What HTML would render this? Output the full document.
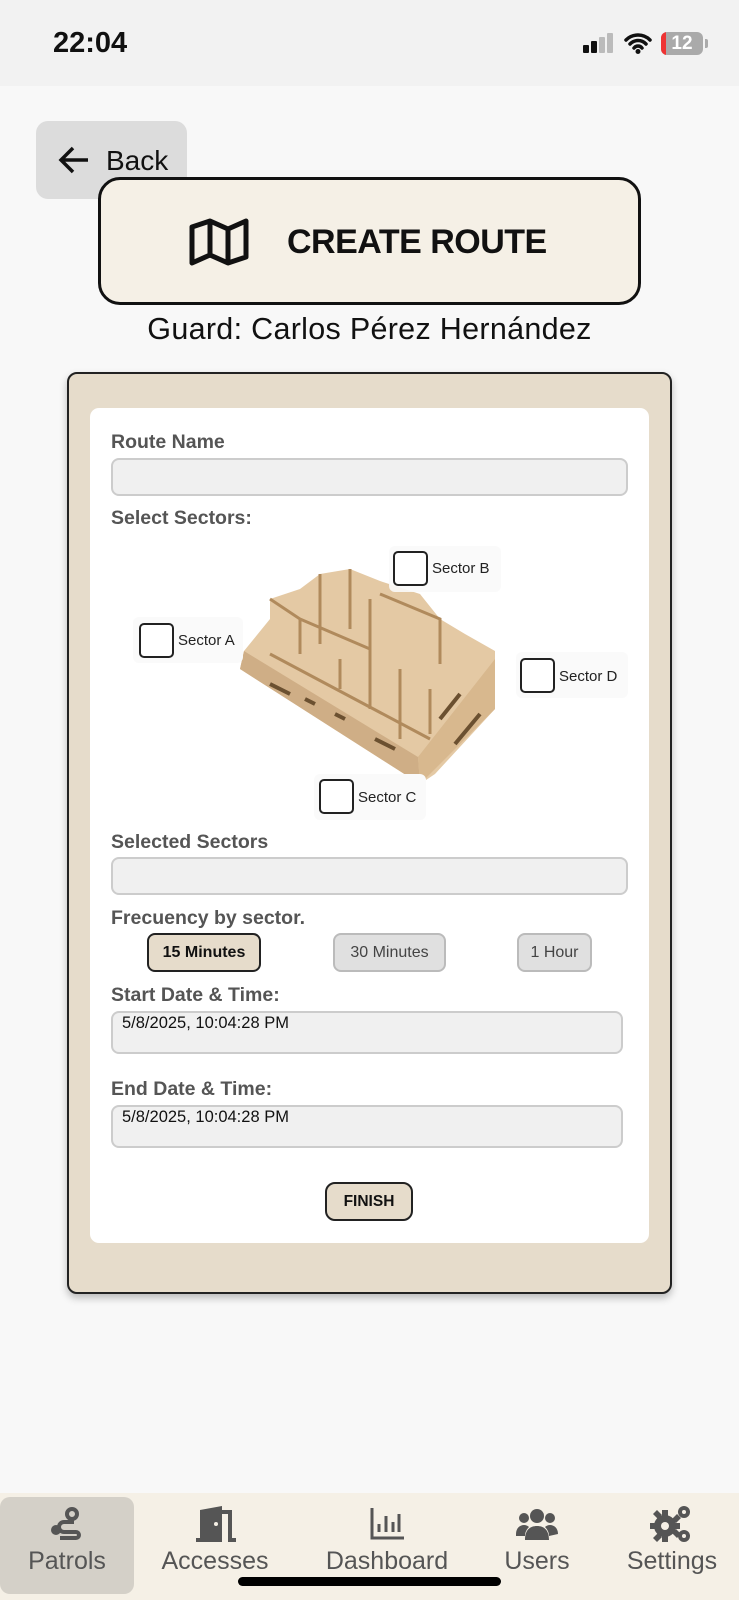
<!DOCTYPE html>
<html><head><meta charset="utf-8"><style>
*{box-sizing:border-box;margin:0;padding:0}
body{width:739px;height:1600px;background:#f8f8f8;font-family:"Liberation Sans",sans-serif;position:relative;overflow:hidden;color:#111}
.abs{position:absolute}
.status{left:0;top:0;width:739px;height:86px;background:#f2f2f2}
.lbl{position:absolute;left:111px;font-weight:bold;font-size:19.5px;color:#555}
.inp{position:absolute;left:111px;width:517px;background:#f0f0f0;border:2px solid #ccc;border-radius:8px}
.cb{position:absolute;width:35px;height:35px;border:2px solid #222;border-radius:5px;background:#fff}
.sl{position:absolute;font-size:15px;color:#222}
.fb{position:absolute;top:933px;height:39px;border:2px solid #bbb;border-radius:8px;background:#e0e0e0;font-size:16px;color:#444;text-align:center;line-height:35px}
.nav{position:absolute;font-size:25px;color:#555;transform:translateX(-50%);top:1547px}
</style></head><body>
<div class="abs status"></div>
<div class="abs" style="left:53px;top:27px;font-size:29px;font-weight:bold">22:04</div>
<div class="abs" style="left:583px;top:45px;width:6px;height:8px;background:#111;border-radius:1px"></div>
<div class="abs" style="left:591px;top:41px;width:6px;height:12px;background:#111;border-radius:1px"></div>
<div class="abs" style="left:599px;top:37px;width:6px;height:16px;background:#bbb;border-radius:1px"></div>
<div class="abs" style="left:607px;top:33px;width:6px;height:20px;background:#bbb;border-radius:1px"></div>
<svg class="abs" style="left:624px;top:32px" width="28" height="22" viewBox="0 0 28 22"><path d="M2 8a17 17 0 0 1 24 0M6 12a11 11 0 0 1 16 0M10 16a5 5 0 0 1 8 0" stroke="#111" stroke-width="3.5" fill="none" stroke-linecap="round"/><circle cx="14" cy="19.5" r="2.5" fill="#111"/></svg>
<div class="abs" style="left:661px;top:32px;width:42px;height:23px;background:#aaa;border-radius:6px;overflow:hidden"><div style="width:5px;height:23px;background:#e33"></div></div>
<div class="abs" style="left:661px;top:32px;width:42px;height:23px;color:#fff;font-weight:bold;font-size:19px;text-align:center;line-height:23px">12</div>
<div class="abs" style="left:705px;top:39px;width:3px;height:9px;background:#aaa;border-radius:0 2px 2px 0"></div>

<div class="abs" style="left:36px;top:121px;width:151px;height:78px;background:#dcdcdc;border-radius:12px"></div>
<svg class="abs" style="left:58px;top:145px" width="34" height="30" viewBox="0 0 34 30"><path d="M30 15H4M15 3 3 15l12 12" stroke="#111" stroke-width="3.5" fill="none"/></svg>
<div class="abs" style="left:106px;top:145px;font-size:28px">Back</div>

<div class="abs" style="left:98px;top:177px;width:543px;height:128px;background:#f5f0e6;border:3px solid #111;border-radius:22px"></div>
<svg class="abs" style="left:188px;top:217px" width="62" height="50" viewBox="0 0 62 50"><path d="M4 10 22 4 40 12 58 4V40L40 46 22 38 4 46Z M22 4V38 M40 12V46" stroke="#111" stroke-width="5" fill="none" stroke-linejoin="round"/></svg>
<div class="abs" style="left:287px;top:223px;font-size:34px;font-weight:bold;letter-spacing:-0.5px">CREATE ROUTE</div>
<div class="abs" style="left:0;width:739px;top:312px;text-align:center;font-size:30.5px;letter-spacing:0.3px">Guard: Carlos Pérez Hernández</div>

<div class="abs" style="left:67px;top:372px;width:605px;height:922px;background:#e6dccb;border:2px solid #222;border-radius:10px;box-shadow:0 4px 8px rgba(0,0,0,.25)"></div>
<div class="abs" style="left:90px;top:408px;width:559px;height:835px;background:#fff;border-radius:9px"></div>

<div class="lbl" style="top:431px">Route Name</div>
<div class="inp" style="top:458px;height:38px"></div>
<div class="lbl" style="top:507px">Select Sectors:</div>

<svg class="abs" style="left:240px;top:559px" width="262" height="230" viewBox="0 0 262 230">
<polygon points="4,92 30,60 30,40 60,30 80,15 110,10 140,22 180,35 200,60 225,75 255,92 255,150 195,215 180,225 0,110" fill="#e4c9a4"/>
<polygon points="4,92 178,198 180,225 0,110" fill="#cfae86"/>
<polygon points="178,198 255,100 255,150 180,225" fill="#d8b88e"/>
<path d="M30 40 60 60 60 95 M60 60 130 90 M110 10 110 70 M80 15 80 85 M140 35 200 60 200 105 M130 40 130 90 M100 100 100 130 M130 90 130 150 M160 110 160 180 M190 130 190 175 M30 95 190 180" stroke="#b08a5c" stroke-width="3" fill="none"/>
<path d="M30 125l20 10M65 140l10 5M95 155l10 5M135 180l20 10M200 160l20-25M215 185l25-30" stroke="#6b5030" stroke-width="4"/>
</svg>

<div class="abs" style="left:133px;top:617px;width:110px;height:46px;background:#fafafa;border-radius:6px"></div>
<div class="cb" style="left:139px;top:623px"></div><div class="sl" style="left:178px;top:632px">Sector A</div>
<div class="abs" style="left:389px;top:546px;width:112px;height:46px;background:#fafafa;border-radius:6px;opacity:.9"></div>
<div class="cb" style="left:393px;top:551px"></div><div class="sl" style="left:432px;top:560px">Sector B</div>
<div class="abs" style="left:516px;top:652px;width:112px;height:46px;background:#fafafa;border-radius:6px"></div>
<div class="cb" style="left:520px;top:658px"></div><div class="sl" style="left:559px;top:668px">Sector D</div>
<div class="abs" style="left:314px;top:774px;width:112px;height:46px;background:#fafafa;border-radius:6px"></div>
<div class="cb" style="left:319px;top:779px"></div><div class="sl" style="left:358px;top:789px">Sector C</div>

<div class="lbl" style="top:831px">Selected Sectors</div>
<div class="inp" style="top:857px;height:38px"></div>
<div class="lbl" style="top:907px">Frecuency by sector.</div>
<div class="fb" style="left:147px;width:114px;background:#e6dccb;border-color:#222;color:#111;font-weight:bold">15 Minutes</div>
<div class="fb" style="left:333px;width:113px">30 Minutes</div>
<div class="fb" style="left:517px;width:75px">1 Hour</div>
<div class="lbl" style="top:984px">Start Date &amp; Time:</div>
<div class="inp" style="top:1011px;height:43px;width:512px;font-size:16.5px;padding:0 0 0 9px;line-height:20px">5/8/2025, 10:04:28 PM</div>
<div class="lbl" style="top:1078px">End Date &amp; Time:</div>
<div class="inp" style="top:1105px;height:43px;width:512px;font-size:16.5px;padding:0 0 0 9px;line-height:20px">5/8/2025, 10:04:28 PM</div>
<div class="abs" style="left:325px;top:1182px;width:88px;height:39px;background:#e6dccb;border:2px solid #222;border-radius:10px;font-size:15.5px;font-weight:bold;text-align:center;line-height:35px">FINISH</div>

<div class="abs" style="left:0;top:1493px;width:739px;height:107px;background:#f5f0e6"></div>
<div class="abs" style="left:0;top:1497px;width:134px;height:97px;background:#d4d0c8;border-radius:10px"></div>
<svg class="abs" style="left:48px;top:1506px" width="36" height="36" viewBox="0 0 36 36"><circle cx="24" cy="8" r="5" fill="none" stroke="#555" stroke-width="4"/><path d="M24 13v3H16a5 5 0 0 0 0 10h12a3 3 0 0 1 0 6H12" stroke="#555" stroke-width="4" fill="none"/><circle cx="8" cy="24" r="5" fill="#555"/></svg>
<svg class="abs" style="left:194px;top:1506px" width="42" height="36" viewBox="0 0 42 36"><path d="M28 6h8v28h6" stroke="#555" stroke-width="4" fill="none"/><path d="M2 36V32h4V4l22-4v36Z" fill="#555"/><circle cx="22" cy="18" r="2" fill="#f5f0e6"/></svg>
<svg class="abs" style="left:369px;top:1506px" width="36" height="34" viewBox="0 0 36 34"><path d="M3 2v30h32M10 26V18M17 26V10M24 26V16M30 26V8" stroke="#555" stroke-width="3" fill="none"/></svg>
<svg class="abs" style="left:516px;top:1508px" width="42" height="32" viewBox="0 0 42 32"><circle cx="21" cy="8" r="7" fill="#555"/><circle cx="8" cy="10" r="5" fill="#555"/><circle cx="34" cy="10" r="5" fill="#555"/><path d="M9 32c0-10 5-14 12-14s12 4 12 14Z M0 26c0-6 4-9 8-9 2 0 4 1 5 2-3 3-4 6-4 9H0ZM42 26c0-6-4-9-8-9-2 0-4 1-5 2 3 3 4 6 4 9Z" fill="#555"/></svg>
<svg class="abs" style="left:650px;top:1504px" width="42" height="40" viewBox="0 0 42 40"><g fill="#555"><circle cx="15" cy="22" r="11"/><path d="M12 6h6v6h-6zM12 32h6v6h-6zM0 19h6v6H0zM24 19h6v6h-6zM3 10l4-4 5 5-4 4zM22 29l4-4 5 5-4 4zM3 34l4 4 5-5-4-4zM22 15l4 4 5-5-4-4z"/><circle cx="34" cy="8" r="6"/><circle cx="34" cy="32" r="6"/></g><circle cx="15" cy="22" r="4" fill="#f5f0e6"/><circle cx="34" cy="8" r="2" fill="#f5f0e6"/><circle cx="34" cy="32" r="2" fill="#f5f0e6"/></svg>
<div class="nav" style="left:67px">Patrols</div>
<div class="nav" style="left:215px">Accesses</div>
<div class="nav" style="left:387px">Dashboard</div>
<div class="nav" style="left:537px">Users</div>
<div class="nav" style="left:672px">Settings</div>
<div class="abs" style="left:238px;top:1577px;width:263px;height:9px;background:#000;border-radius:5px"></div>
</body></html>
